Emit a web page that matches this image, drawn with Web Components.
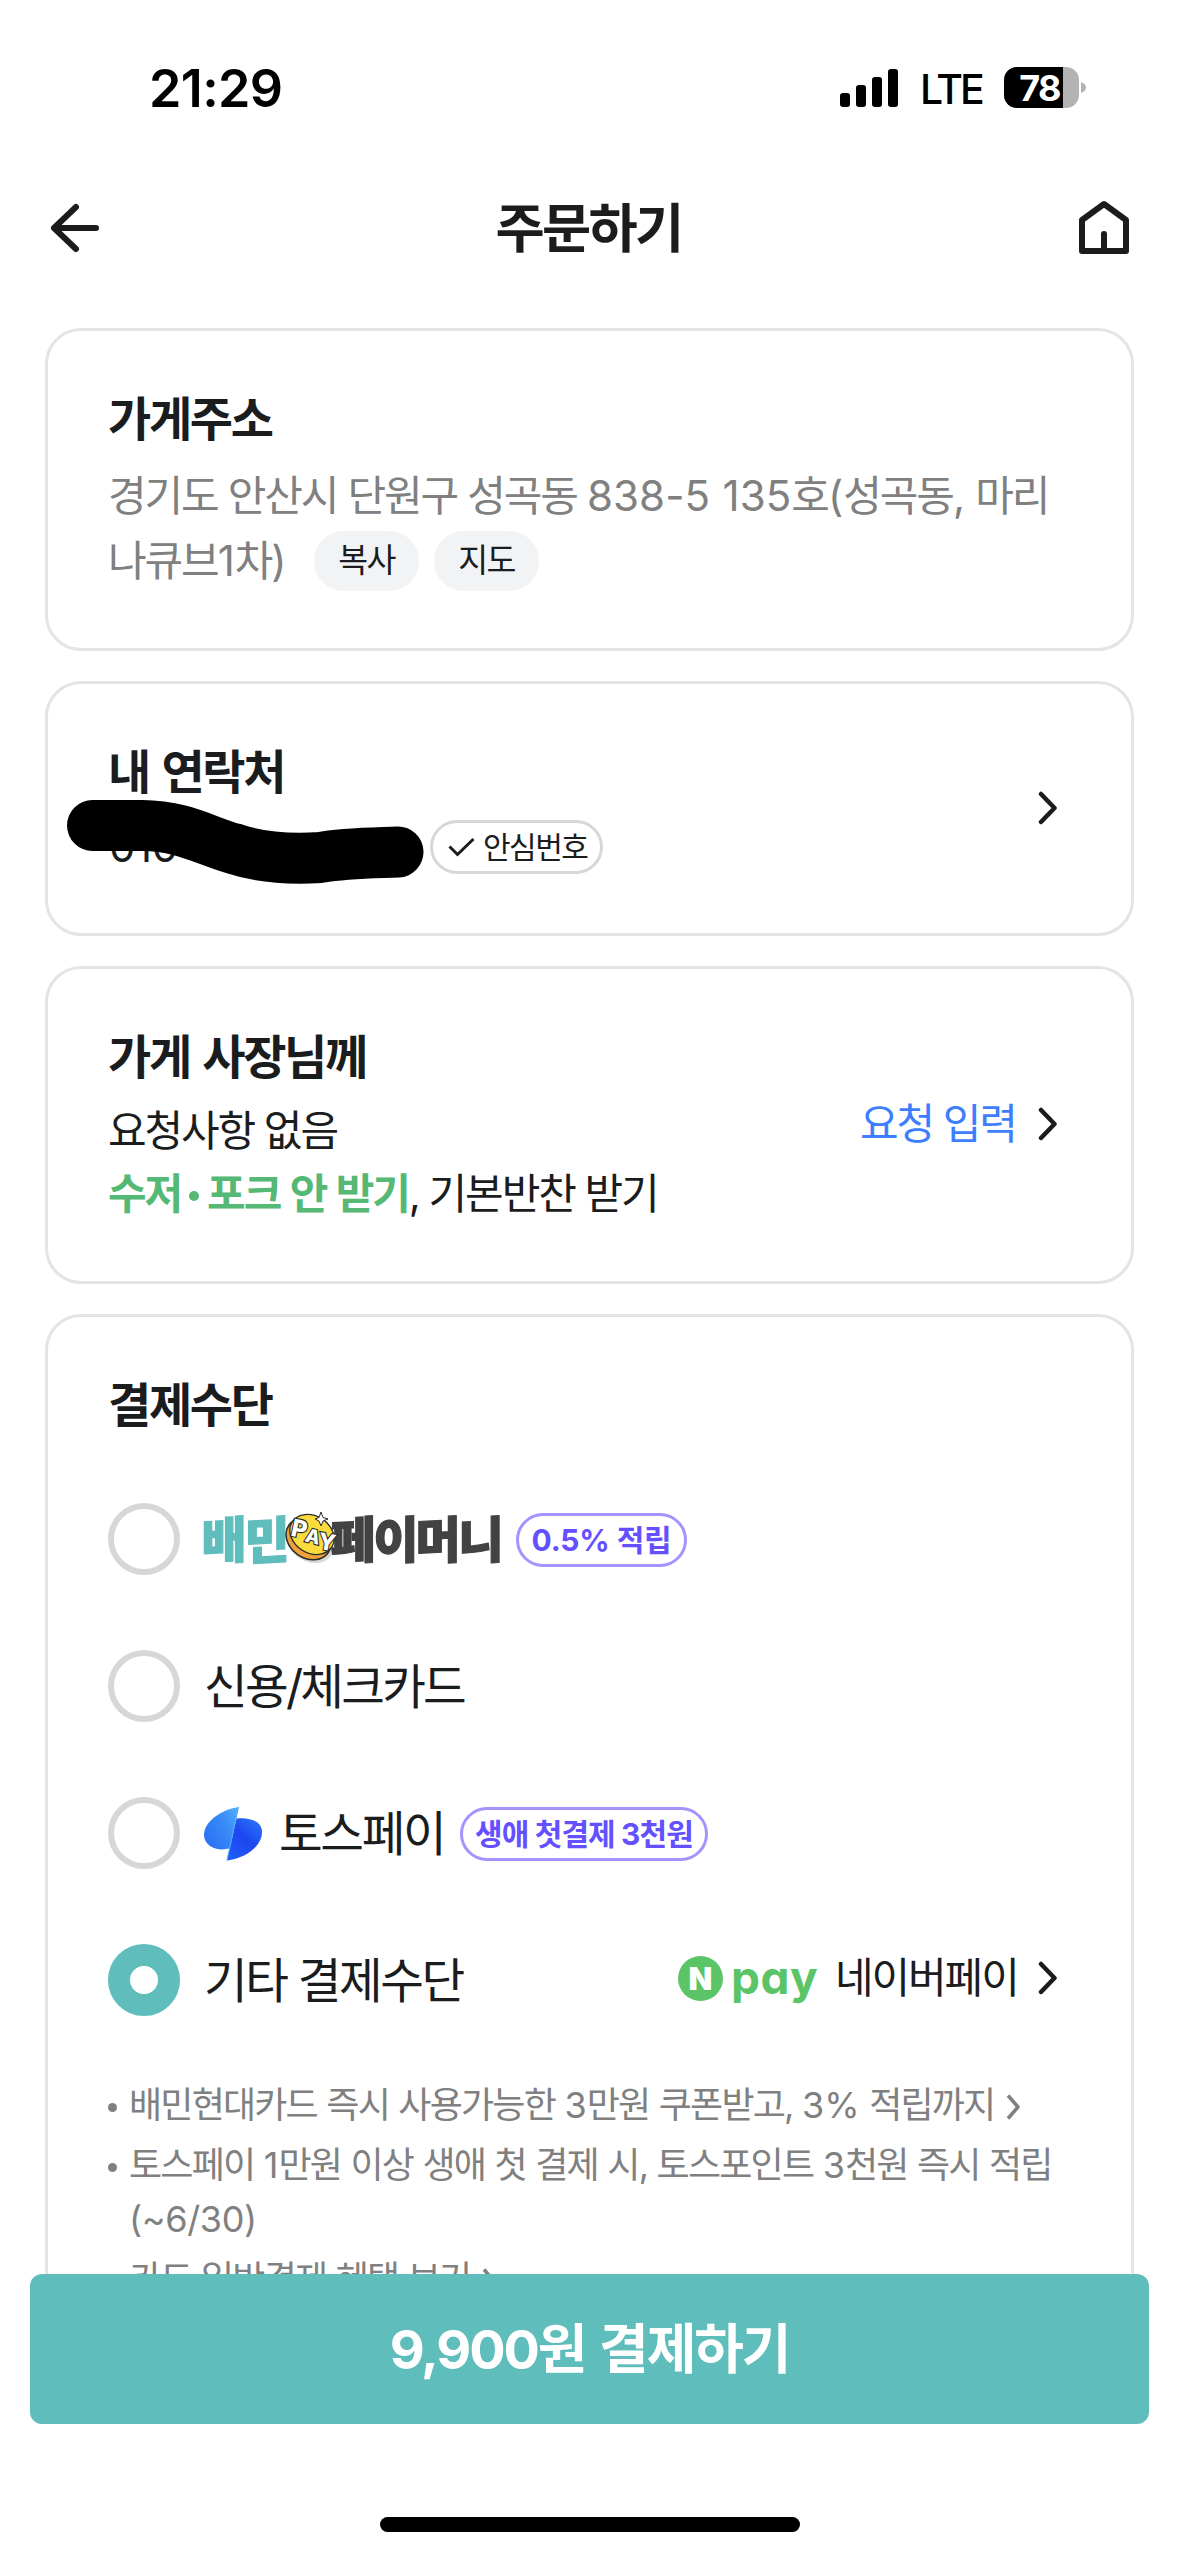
<!DOCTYPE html>
<html lang="ko">
<head>
<meta charset="utf-8">
<title>주문하기</title>
<style>
  html, body { margin: 0; background: #fff; }
  body { width: 1179px; height: 2556px; overflow: hidden; font-family: Inter, "Noto Sans CJK KR", sans-serif; color: #1a1c1e; }
</style>
</head>
<body>
<order-screen></order-screen>
<script>
// Hangul is set tight; digits and punctuation (.d) keep their natural width.
const BASE = `*{box-sizing:border-box;letter-spacing:-.05em}.d{letter-spacing:.002em}svg{display:block;flex:none}`;
const define = (name, html) => {
  const tpl = document.createElement('template');
  tpl.innerHTML = html.replace('<style>', '<style>' + BASE);
  customElements.define(name, class extends HTMLElement {
    constructor() {
      super();
      this.attachShadow({ mode: 'open' }).append(tpl.content.cloneNode(true));
    }
  });
};

define('status-bar', `<style>
  :host{display:flex;height:176px;padding:67px 93px 0 149px;justify-content:space-between;align-items:flex-start;color:#000}
  .time{font-size:52px;font-weight:600;line-height:43px;letter-spacing:-.012em}
  .right{display:flex;align-items:center;height:42px}
  .lte{font-size:41px;font-weight:500;letter-spacing:-.075em;line-height:42px;margin:1px 0 0 22px;width:84px}
</style>
<div class="time">21:29</div>
<div class="right">
  <svg width="58" height="38" viewBox="0 0 58 38"><rect x="0" y="24" width="10" height="14" rx="3"/><rect x="16" y="16" width="10" height="22" rx="3"/><rect x="32" y="8" width="10" height="30" rx="3"/><rect x="48" y="0" width="10" height="38" rx="3"/></svg>
  <span class="lte">LTE</span>
  <svg width="82" height="42" viewBox="0 0 82 42">
    <defs><clipPath id="b"><rect width="75" height="41" rx="13"/></clipPath></defs>
    <g clip-path="url(#b)"><rect width="75" height="41" fill="#b3b3b3"/><rect width="59" height="41"/></g>
    <path d="M77 15c3 1 5 3 5 5.500s-2 4.500-5 5.500z" fill="#b3b3b3"/>
    <text x="35.500" y="33.500" text-anchor="middle" fill="#fff" font-size="36" font-weight="700">78</text>
  </svg>
</div>`);

define('nav-bar', `<style>
  :host{display:flex;height:104px;padding:0 48px 0 50px;align-items:center;justify-content:space-between}
  h1{margin:0 2px 0 0;font-size:53.500px;font-weight:700;line-height:70px;padding-top:1px}
</style>
<svg width="51" height="50" viewBox="0 0 51 50" fill="none" stroke="#1a1c1e" stroke-width="6" stroke-linecap="round" stroke-linejoin="round"><path d="M46 25H4M26 4 4 25l22 21"/></svg>
<h1><slot></slot></h1>
<svg width="53" height="56" viewBox="0 0 53 56" fill="none" stroke="#1a1c1e" stroke-width="6" stroke-linecap="round" stroke-linejoin="round"><path d="M4 51V20L26 4l22 16v31ZM26 34v17"/></svg>`);

define('chevron-icon', `<style>:host{display:block}</style>
<svg width="20" height="36" viewBox="0 0 20 36" fill="none" stroke="#1a1c1e" stroke-width="4.500" stroke-linecap="round" stroke-linejoin="round"><path d="M3 4l13.500 14L3 32"/></svg>`);

define('small-chevron', `<style>:host{display:inline-block;margin-left:12px}</style>
<svg width="15" height="26" viewBox="0 0 15 26" fill="none" stroke="#808080" stroke-width="3.500" stroke-linejoin="round"><path d="M2 1.500 12 13 2 24.500"/></svg>`);

define('info-card', `<style>
  :host{display:flex;align-items:center;justify-content:space-between;border:3px solid #e3e4e6;border-radius:36px;padding:0 73px 0 60px;flex:none;box-sizing:border-box}
  .main{align-self:flex-start;padding-top:54px;flex:1}
  h2{margin:0;font-size:47px;font-weight:700;line-height:67px;white-space:nowrap;word-spacing:.08em}
  .action{display:flex;align-items:center;padding-bottom:2px}
</style>
<div class="main"><h2><slot name="title"></slot></h2><slot></slot></div>
<div class="action"><slot name="action"></slot></div>`);

define('pill-button', `<style>
  :host{display:flex;width:105px;height:60px;border-radius:30px;background:#f2f3f5;align-items:center;justify-content:center;font-size:32.500px}
</style><span><slot></slot></span>`);

define('store-address', `<style>
  :host{display:block;margin-top:11px;font-size:42px;line-height:65px;color:#808080;white-space:nowrap;word-spacing:.01em}
  .row{display:flex;align-items:center;height:65px}
  .row>span{width:206px}
  pill-button{color:#1a1c1e;line-height:60px;margin-right:15px}
</style>
<div>경기도 안산시 단원구 성곡동 <span class="d">838-5 135</span>호<span class="d">(</span>성곡동<span class="d">,</span> 마리</div>
<div class="row"><span>나큐브<span class="d">1</span>차<span class="d">)</span></span><pill-button>복사</pill-button><pill-button>지도</pill-button></div>`);

define('contact-line', `<style>
  :host{display:flex;position:relative;margin-top:15px;height:54px;align-items:center}
  .num{width:322px;font-size:42px;line-height:52px;padding-left:1px;letter-spacing:-.01em}
  .safe{display:flex;width:173px;height:54px;border:3px solid #d5d7d9;border-radius:27px;align-items:center;padding-left:15px;gap:8px;font-size:30px;line-height:48px;white-space:nowrap}
  .mark{position:absolute;left:-45px;top:-24px}
</style>
<span class="num">010</span>
<span class="safe"><svg width="27" height="20" viewBox="0 0 27 20" fill="none" stroke="#1a1c1e" stroke-width="3"><path d="M1.500 9.500 9.500 17.500 25.500 2"/></svg><span>안심번호</span></span>
<svg class="mark" width="366" height="96" viewBox="63 796 366 96" fill="none" stroke="#000" stroke-width="51" stroke-linecap="round" stroke-linejoin="round"><path d="M92.500 825.500H142C185 826 205 841 235 849C262 858 295 859 320 857.500C345 853 372 853 398 852"/></svg>`);

define('request-lines', `<style>
  :host{display:block;margin-top:9px;font-size:42px;line-height:63px;white-space:nowrap}
  b{color:#55b875;font-weight:700;word-spacing:.04em}
  i{display:inline-block;width:10px;height:10px;border-radius:50%;background:#55b875;margin:0 8px 8px 8px}
</style>
<div>요청사항 없음</div><div><b>수저<i></i>포크 안 받기</b>, 기본반찬 받기</div>`);

define('reward-badge', `<style>
  :host{display:flex;height:54px;border:3px solid #a394ff;border-radius:27px;align-items:center;justify-content:center;color:#6450ff;font-size:30px;font-weight:700;line-height:48px;box-sizing:border-box;white-space:nowrap;margin-bottom:1px}
  span,slot{letter-spacing:var(--track,-.05em)}
</style><span><slot></slot></span>`);

define('pay-option', `<style>
  :host{display:flex;height:72px;margin-bottom:75px;align-items:center;font-size:47.500px;line-height:72px;white-space:nowrap}
  .radio{width:72px;height:72px;border:6px solid #d5d7d9;border-radius:50%;margin-right:24px;flex:none}
  :host([checked]) .radio{border:22px solid #5fbdbc}
  :host(:last-of-type){margin-bottom:0}
  slot{letter-spacing:var(--track,-.05em)}
  .body{display:flex;align-items:center;flex:1;padding-top:2px}
</style><span class="radio"></span><div class="body"><slot></slot></div>`);

define('baemin-logo', `<style>
  :host{display:flex;width:312px;height:54px;position:relative;font-size:50px;font-weight:900;line-height:54px}
  div{padding-top:1px;flex:none}
  span{display:inline-block;transform:skewY(-3deg) scaleX(.98);-webkit-text-stroke:1.200px;width:42.500px;letter-spacing:0}
  .mint{color:#5fbdbc;width:129px;margin-left:-3px}
  .dark{color:#424242}
  svg{position:absolute;left:81px;top:-1px}
</style>
<div class="mint"><span>배</span><span>민</span></div><div class="dark"><span>페</span><span>이</span><span>머</span><span>니</span></div>
<svg width="56" height="56" viewBox="0 0 56 56">
  <ellipse cx="26" cy="31" rx="24" ry="19" transform="rotate(28 26 31)" fill="#000" opacity=".15"/>
  <ellipse cx="23.500" cy="27" rx="24" ry="19" transform="rotate(35 23.500 27)" fill="#f0a23a" stroke="#2b2b2b" stroke-width="1.500"/>
  <ellipse cx="27" cy="22.500" rx="23.500" ry="18.500" transform="rotate(32 27 22.500)" fill="#fadb3c" stroke="#2b2b2b" stroke-width="1.300"/>
  <g font-weight="800" fill="#fff" stroke="#2b2b2b" stroke-width="2.200" paint-order="stroke" text-anchor="middle">
    <text transform="translate(12 25) rotate(12)" font-size="24">P</text><text transform="translate(26 31) rotate(14)" font-size="19">A</text><text transform="translate(40 38) rotate(10)" font-size="23">Y</text>
  </g>
  <path d="M36 0 38 5.500 43 7 38 9 36 14 34 9 30 7 34 5.500Z" fill="#fff" stroke="#2b2b2b"/>
</svg>`);

define('toss-icon', `<style>:host{display:block;margin-right:17px}</style>
<svg width="58" height="54" viewBox="0 0 58 54">
  <defs>
    <linearGradient id="l" x1="0" y1=".7" x2="1" y2="0"><stop stop-color="#2b72f5"/><stop offset=".6" stop-color="#3b8df8"/><stop offset="1" stop-color="#52b4fa"/></linearGradient>
    <linearGradient id="r" x1=".9" y1="0" x2=".2" y2="1"><stop stop-color="#2d76f8"/><stop offset=".5" stop-color="#1c46ef"/><stop offset="1" stop-color="#205bfb"/></linearGradient>
  </defs>
  <path d="M34.500 0C16 3 0 15 0 28 0 37 9 42.500 18 42.500L25.500 41.500Z" fill="url(#l)"/>
  <path d="M32.500 11.500C47 10 58 15 58 25 58 39 42 51 23 53.500Z" fill="url(#r)"/>
  <path d="M34.500 0 23 53.500" stroke="#4aa6fb" stroke-width="1"/>
</svg>`);

define('npay-method', `<style>
  :host{display:flex;margin-left:auto;align-items:center;font-size:42px;line-height:60px;padding-bottom:6px}
  .n{display:flex;width:45px;height:45px;border-radius:50%;background:#5ac466;color:#fff;align-items:center;justify-content:center;font-size:31px;font-weight:900;line-height:45px;letter-spacing:0}
  .pay{width:112px;padding-left:8px;color:#5ac466;font-size:46px;font-weight:650;font-feature-settings:"cv11";letter-spacing:.01em;line-height:58px;padding-bottom:2px}
  .name{width:203px}
</style><span class="n">N</span><span class="pay">pay</span><span class="name">네이버페이</span><chevron-icon></chevron-icon>`);

define('pay-list', `<style>:host{display:block;margin-top:65px}</style>
<pay-option><baemin-logo></baemin-logo><reward-badge style="width:171px;--track:-.005em">0.5% 적립</reward-badge></pay-option>
<pay-option style="--track:-.058em">신용/체크카드</pay-option>
<pay-option><toss-icon></toss-icon><span style="width:181px">토스페이</span><reward-badge style="width:248px;--track:-.03em">생애 첫결제 3천원</reward-badge></pay-option>
<pay-option checked>기타 결제수단<npay-method></npay-method></pay-option>`);

define('note-list', `<style>
  :host{display:block;margin-top:62px;font-size:36px;line-height:54px;color:#808080;white-space:nowrap;word-spacing:.03em}
  ul{margin:0;padding:0;list-style:none;display:flex;flex-direction:column;gap:6px}
  li{display:flex;gap:12px}
  li::before{content:"";width:9px;height:9px;border-radius:50%;background:#808080;margin-top:25px;flex:none}
  small-chevron{vertical-align:-2px}
</style>
<ul><li><span>배민현대카드 즉시 사용가능한 <span class="d">3</span>만원 쿠폰받고, <span class="d">3%</span> 적립까지<small-chevron></small-chevron></span></li>
<li><span>토스페이 <span class="d">1</span>만원 이상 생애 첫 결제 시, 토스포인트 <span class="d">3</span>천원 즉시 적립<br><span class="d" style="letter-spacing:-.01em">(~6/30)</span></span></li>
<li><span>카드 일반결제 혜택 보기<small-chevron></small-chevron></span></li></ul>`);

define('pay-button', `<style>
  :host{display:flex;height:150px;margin:0 30px;border-radius:12px;background:#5fbdbc;color:#fff;align-items:center;justify-content:center;font-size:54px;font-weight:700;padding-bottom:8px;box-sizing:border-box;word-spacing:.06em}
  slot{letter-spacing:-.04em}
</style><span><slot></slot></span>`);

define('order-screen', `<style>
  :host{display:flex;flex-direction:column;height:2556px}
  main{display:flex;flex-direction:column;gap:30px;height:1994px;padding:48px 45px 0;overflow:hidden;flex:none}
  .req{color:#3d7eff;font-size:42px;width:178px;white-space:nowrap;padding-bottom:7px}
  .home{width:420px;height:15px;border-radius:8px;background:#000;margin:93px auto 0}
</style>
<status-bar></status-bar>
<nav-bar>주문하기</nav-bar>
<main>
  <info-card style="height:323px"><span slot="title">가게주소</span><store-address></store-address></info-card>
  <info-card style="height:255px"><span slot="title">내 연락처</span><contact-line></contact-line><chevron-icon slot="action"></chevron-icon></info-card>
  <info-card style="height:318px"><span slot="title">가게 사장님께</span><request-lines></request-lines><span slot="action" class="req">요청 입력</span><chevron-icon slot="action"></chevron-icon></info-card>
  <info-card style="height:1100px"><span slot="title">결제수단</span><pay-list></pay-list><note-list></note-list></info-card>
</main>
<pay-button>9,900원 결제하기</pay-button>
<div class="home"></div>`);
</script>
</body>
</html>
